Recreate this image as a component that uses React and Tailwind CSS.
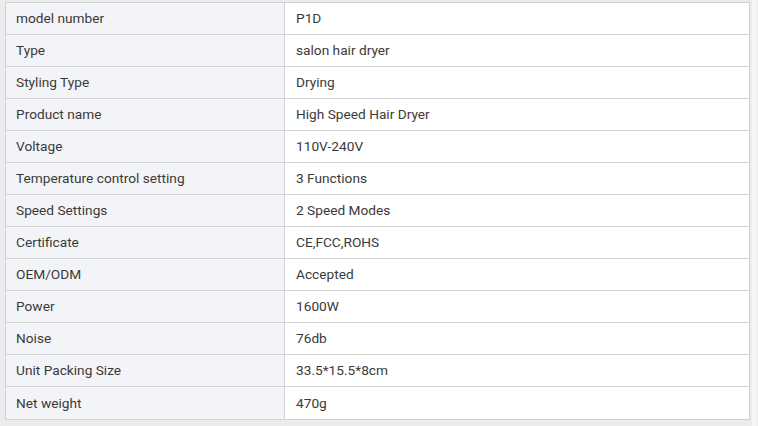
const SPECS = [
  ['model number', 'P1D'],
  ['Type', 'salon hair dryer'],
  ['Styling Type', 'Drying'],
  ['Product name', 'High Speed Hair Dryer'],
  ['Voltage', '110V-240V'],
  ['Temperature control setting', '3 Functions'],
  ['Speed Settings', '2 Speed Modes'],
  ['Certificate', 'CE,FCC,ROHS'],
  ['OEM/ODM', 'Accepted'],
  ['Power', '1600W'],
  ['Noise', '76db'],
  ['Unit Packing Size', '33.5*15.5*8cm'],
  ['Net weight', '470g'],
]

export default function App() {
  return (
    <div className="w-[758px] h-[426px] bg-[#ececec] flex font-['Roboto',sans-serif] text-[13.7px] text-[#3a3a3a]">
      <div className="pl-[5px] pt-[2px]">
        <div className="w-[745px] border border-[#d2d2d2] bg-white">
          {SPECS.map(([k, v], i) => (
            <div
              key={k}
              className={'flex h-[32px] ' + (i < SPECS.length - 1 ? 'border-b border-[#d2d2d2]' : '')}
            >
              <div className="w-[279px] bg-[#f3f4f8] border-r border-[#d2d2d2] pl-[10px] flex items-center">
                {k}
              </div>
              <div className="flex-1 pl-[11px] flex items-center">{v}</div>
            </div>
          ))}
        </div>
      </div>
      <div className="ml-[2px] w-[5px] h-full bg-[#f6f6f6]" />
    </div>
  )
}
